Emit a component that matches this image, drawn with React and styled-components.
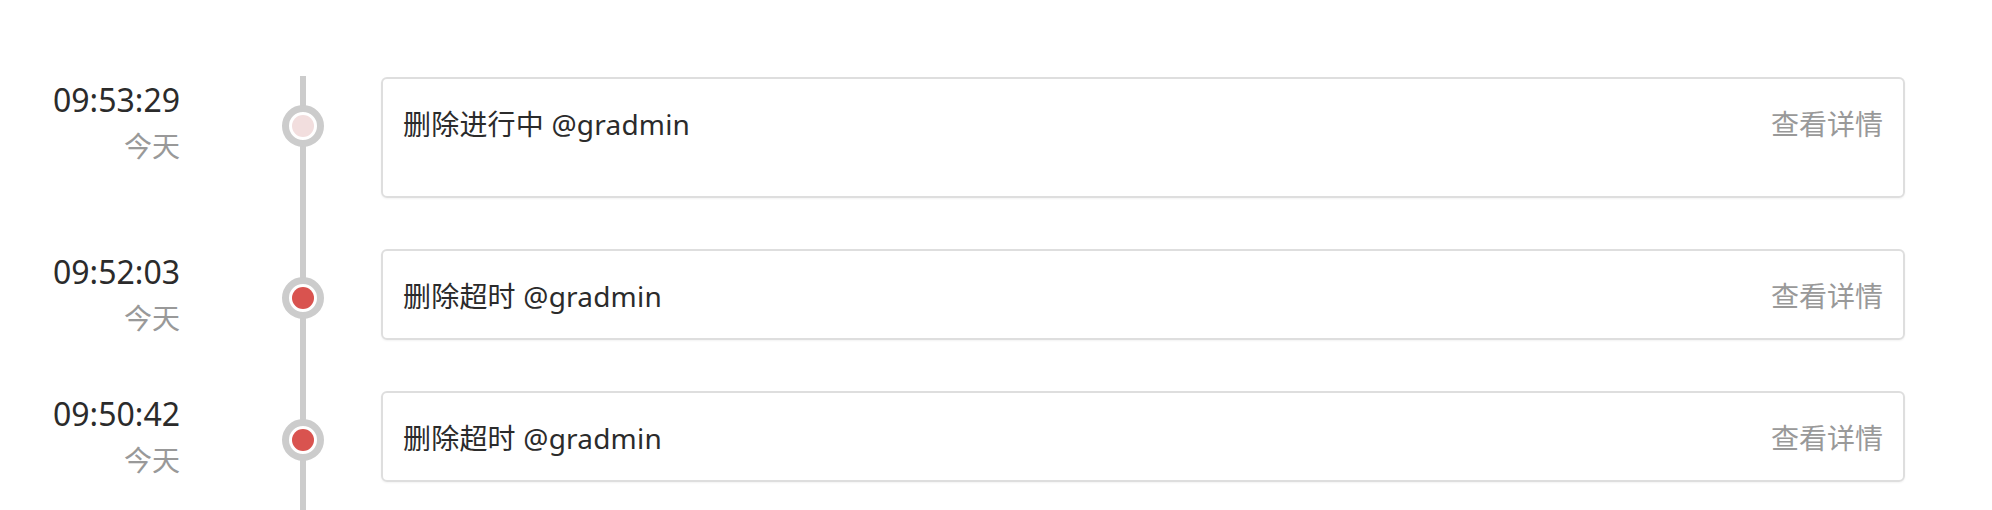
import React from "react";
import styled, { createGlobalStyle } from "styled-components";

const GlobalStyle = createGlobalStyle`
  html, body {
    margin: 0;
    padding: 0;
    background: #ffffff;
    overflow: hidden;
  }
  body {
    font-family: "Noto Sans", "Noto Sans CJK SC", sans-serif;
    color: #2b2b2b;
  }
`;

const Page = styled.div`
  padding: 76px 87px 0 0;
`;

const Timeline = styled.ul`
  list-style: none;
  margin: 0;
  padding: 0;
`;

const Row = styled.li`
  display: flex;
  align-items: stretch;
`;

const TimeCol = styled.div`
  width: 180px;
  flex: none;
  margin-top: 2px;
  text-align: right;
`;

const Clock = styled.div`
  font-family: "Noto Sans", sans-serif;
  font-size: 32px;
  line-height: 44px;
  color: #2b2b2b;
`;

const Day = styled.div`
  font-family: "Noto Sans CJK SC", sans-serif;
  font-size: 28px;
  line-height: 46px;
  color: #999999;
`;

const Axis = styled.div`
  flex: none;
  width: 42px;
  margin: 0 57px 0 102px;
  background: linear-gradient(
    to right,
    transparent 18px,
    #cccccc 18px,
    #cccccc 24px,
    transparent 24px
  );
`;

const Dot = styled.div`
  box-sizing: border-box;
  width: 42px;
  height: 42px;
  margin-top: 29px;
  border-radius: 50%;
  border: 7px solid #cccccc;
  background: #ffffff;
  display: flex;
  align-items: center;
  justify-content: center;

  &::after {
    content: "";
    width: 22px;
    height: 22px;
    border-radius: 50%;
    background: ${(p) => (p.$status === "pending" ? "#f2dede" : "#d9534f")};
  }
`;

const Card = styled.div`
  flex: 1;
  box-sizing: border-box;
  margin-top: 1px;
  margin-bottom: 50px;
  padding: 22px 20px ${(p) => (p.$pending ? "48px" : "18px")} 20px;
  border: 2px solid #dedede;
  border-radius: 6px;
  box-shadow: 0 1px 2px rgba(0, 0, 0, 0.05);
  display: flex;
  align-items: flex-start;
  justify-content: space-between;
  font-size: 28px;
  line-height: 47px;
`;

const Message = styled.span`
  color: #2b2b2b;
  letter-spacing: 0.2px;
`;

const DetailLink = styled.a`
  color: #999999;
  text-decoration: none;
  cursor: pointer;
`;

const events = [
  { time: "09:53:29", day: "今天", text: "删除进行中 @gradmin", status: "pending" },
  { time: "09:52:03", day: "今天", text: "删除超时 @gradmin", status: "error" },
  { time: "09:50:42", day: "今天", text: "删除超时 @gradmin", status: "error" },
];

export default function App() {
  return (
    <>
      <GlobalStyle />
      <Page>
        <Timeline>
          {events.map((e) => (
            <Row key={e.time}>
              <TimeCol>
                <Clock>{e.time}</Clock>
                <Day>{e.day}</Day>
              </TimeCol>
              <Axis>
                <Dot $status={e.status} />
              </Axis>
              <Card $pending={e.status === "pending"}>
                <Message>{e.text}</Message>
                <DetailLink>查看详情</DetailLink>
              </Card>
            </Row>
          ))}
        </Timeline>
      </Page>
    </>
  );
}
